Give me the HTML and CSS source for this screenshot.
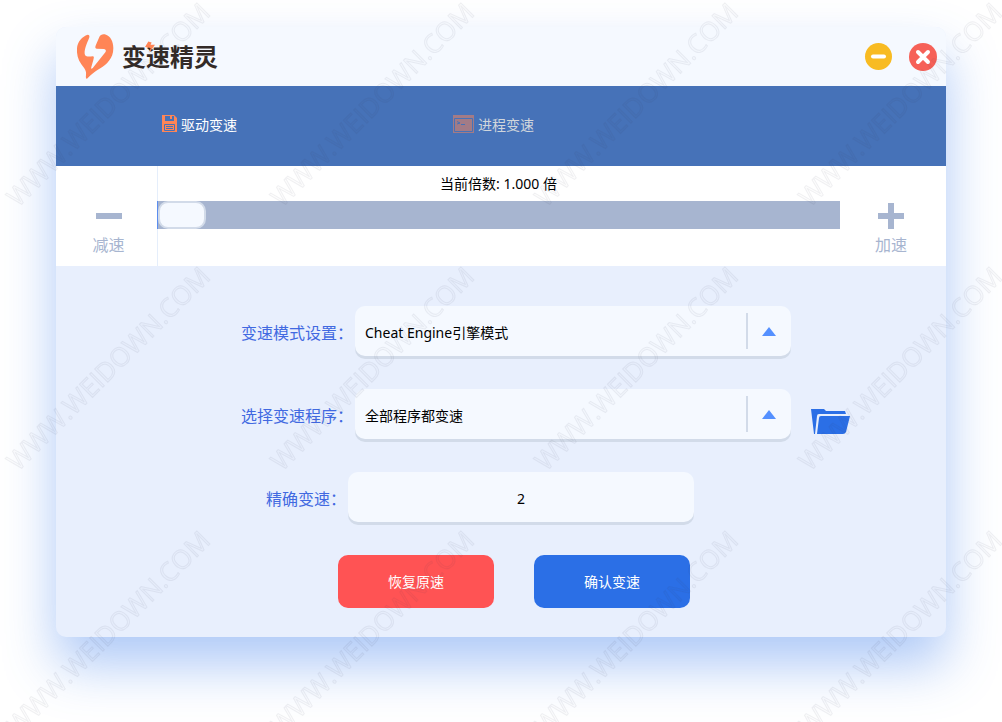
FILE: index.html
```
<!DOCTYPE html>
<html lang="zh-CN">
<head>
  <meta charset="UTF-8" />
  <title>变速精灵</title>
  <link rel="stylesheet" href="styles.css">
</head>
<body>
  <div class="window">
    <header class="title-bar">
      <svg class="logo" viewBox="78 57 114 141" aria-hidden="true">
        <path fill="#ff8556" d="M113 62C118 62 120 67 117 73C111 88 103 105 104 119C105 128 114 129 128 127C133 127 132 131 130 138L124 159C122 166 126 166 130 160L166 115C169 110 168 106 162 105L140 104C135 103 135 98 138 92L148 69C151 61 160 59 168 62C181 67 190 81 190 103C190 134 170 151 151 163C133 174 124 182 111 194C108 195 107 190 108 183C110 170 103 163 94 151C83 136 80 120 81 103C82 83 97 67 113 62Z"/>
      </svg>
      <h1>变速精灵
        <svg class="spark" viewBox="0 0 9 10" aria-hidden="true"><path fill="#ff8556" d="M3 0L6 1L5 3L9 3L4 10L5 6L0 5Z"/></svg>
      </h1>
      <div class="window-buttons">
        <button class="minimize" aria-label="最小化">
          <svg width="27" height="27" viewBox="0 0 27 27"><path d="M8 13.5H19"/></svg>
        </button>
        <button class="close" aria-label="关闭">
          <svg width="28" height="28" viewBox="0 0 28 28"><path d="M9 9L19 19M19 9L9 19"/></svg>
        </button>
      </div>
    </header>

    <nav class="tabs">
      <a class="tab active" href="#driver">
        <svg width="15" height="17" viewBox="0 0 15 17" aria-hidden="true">
          <path fill="#ff8556" d="M0 0H12L15 3V17H0Z"/>
          <path fill="#4672b8" d="M3 1H12V6H3Z"/>
          <path fill="#ff8556" d="M4 1H11V5H4Z"/>
          <path fill="#4672b8" d="M4 1H8V5H4ZM8 4H11V5H8ZM10 1H11V5H10Z"/>
          <path fill="none" stroke="#4672b8" d="M2.500 15.500V9.500H12.500V15.500Z"/>
          <path fill="#4672b8" d="M4 11H11V12H4ZM4 13H11V14H4Z"/>
        </svg>
        驱动变速
      </a>
      <a class="tab" href="#process">
        <svg width="21" height="18" viewBox="0 0 21 18" aria-hidden="true">
          <path fill="#ff8556" d="M0 0H21V18H0Z"/>
          <path fill="none" stroke="#4672b8" d="M1.500 3.500H19.500V16.500H1.500ZM4 6.500L7 8L4 9M8 9.500H12"/>
        </svg>
        进程变速
      </a>
    </nav>

    <section class="speed">
      <button class="step slower"><span class="sign"></span>减速</button>
      <div class="slider">
        <label for="speed">当前倍数: 1.000 倍</label>
        <input type="range" id="speed" min="0" max="100" value="0">
      </div>
      <button class="step faster"><span class="sign plus"></span>加速</button>
    </section>

    <form class="settings">
      <div class="row">
        <label for="mode">变速模式设置：</label>
        <div class="select-box">
          <select id="mode"><option>Cheat Engine引擎模式</option></select>
        </div>
      </div>
      <div class="row">
        <label for="program">选择变速程序：</label>
        <div class="select-box">
          <select id="program"><option>全部程序都变速</option></select>
        </div>
        <button type="button" class="folder" aria-label="浏览">
          <svg width="40" height="26" viewBox="0 0 40 26">
            <path fill="#2b6fe6" d="M0 0H13L15 2H34L35 5H8Q6 5 6 7L4 25H3Z"/>
            <path fill="#2b6fe6" d="M10 7H39L35 23Q34 25 32 25H6L8 9Q8 7 10 7Z"/>
          </svg>
        </button>
      </div>
      <div class="row exact">
        <label for="exact">精确变速：</label>
        <input type="text" id="exact" value="2">
      </div>
      <div class="row actions">
        <button type="button" class="restore">恢复原速</button>
        <button type="button" class="confirm">确认变速</button>
      </div>
    </form>
  </div>

  <svg class="watermark" aria-hidden="true">
    <text transform="translate(18 208) rotate(-45)">WWW.WEIDOWN.COM</text>
    <text transform="translate(282 208) rotate(-45)">WWW.WEIDOWN.COM</text>
    <text transform="translate(546 208) rotate(-45)">WWW.WEIDOWN.COM</text>
    <text transform="translate(810 208) rotate(-45)">WWW.WEIDOWN.COM</text>
    <text transform="translate(18 472) rotate(-45)">WWW.WEIDOWN.COM</text>
    <text transform="translate(282 472) rotate(-45)">WWW.WEIDOWN.COM</text>
    <text transform="translate(546 472) rotate(-45)">WWW.WEIDOWN.COM</text>
    <text transform="translate(810 472) rotate(-45)">WWW.WEIDOWN.COM</text>
    <text transform="translate(18 736) rotate(-45)">WWW.WEIDOWN.COM</text>
    <text transform="translate(282 736) rotate(-45)">WWW.WEIDOWN.COM</text>
    <text transform="translate(546 736) rotate(-45)">WWW.WEIDOWN.COM</text>
    <text transform="translate(810 736) rotate(-45)">WWW.WEIDOWN.COM</text>
  </svg>
</body>
</html>
```
FILE: styles.css
```
* {
  box-sizing: border-box;
}
body {
  margin: 0;
  padding: 27px 56px 85px;
  background: #fff;
  font-family: "Noto Sans", "Noto Sans CJK SC", sans-serif;
  font-size: 14px;
  line-height: 20px;
}
button, input, select {
  font: inherit;
  border: 0;
  margin: 0;
  padding: 0;
}
button {
  cursor: pointer;
  background: none;
}
svg {
  display: block;
}
.window {
  border-radius: 10px;
  overflow: hidden;
  background: #e8effd;
  box-shadow: 0 28px 52px rgba(63, 127, 235, 0.42);
}

/* title bar */
.title-bar {
  display: flex;
  align-items: center;
  height: 59px;
  padding: 0 9px 0 20px;
  background: #f5f9ff;
}
.logo {
  width: 38px;
  height: 47px;
}
h1 {
  position: relative;
  margin: 0 auto 0 8px;
  font-size: 24px;
  line-height: 32px;
  color: #332b28;
}
.spark {
  position: absolute;
  left: 23px;
  top: 0;
  width: 10px;
  height: 12px;
}
.window-buttons {
  display: flex;
  align-items: center;
  gap: 17px;
}
.window-buttons button {
  border-radius: 50%;
}
.window-buttons path {
  fill: none;
  stroke: #fff;
  stroke-width: 4;
  stroke-linecap: round;
}
.minimize {
  background: #f8bb22;
}
.close {
  background: #f66158;
}

/* tabs */
.tabs {
  display: flex;
  align-items: center;
  gap: 216px;
  height: 80px;
  padding: 0 106px 2px;
  background: #4672b8;
}
.tab {
  display: flex;
  align-items: center;
  gap: 4px;
  color: #fff;
  text-decoration: none;
  white-space: nowrap;
}
.tab svg {
  margin-bottom: 3px;
}
.tab:not(.active) svg {
  opacity: 0.5;
}
.tab:not(.active) {
  color: #d0d6dc;
}

/* speed slider */
.speed {
  display: flex;
  height: 100px;
  background: #fff;
}
.step {
  display: flex;
  flex-direction: column;
  align-items: center;
  gap: 6px;
  padding-top: 37px;
  font-size: 16px;
  color: #a7b5d0;
}
.slower {
  width: 101px;
  padding-left: 4px;
  box-shadow: 1px 0 0 #e5eefb;
}
.faster {
  width: 106px;
  padding-right: 4px;
}
.sign {
  width: 26px;
  height: 26px;
  background: linear-gradient(#a7b5d0, #a7b5d0) center / 26px 6px no-repeat;
}
.sign.plus {
  background:
    linear-gradient(#a7b5d0, #a7b5d0) center / 26px 6px no-repeat,
    linear-gradient(#a7b5d0, #a7b5d0) center / 6px 26px no-repeat;
}
.slider {
  flex: 1;
  display: flex;
  flex-direction: column;
  padding-top: 8px;
  gap: 7px;
  text-align: center;
}
.slider input {
  appearance: none;
  width: 100%;
  height: 28px;
  border-left: 1px solid #5b8def;
  background: #a7b5d0;
}
.slider input::-webkit-slider-thumb {
  appearance: none;
  width: 48px;
  height: 28px;
  border: 2px solid #d2dbe9;
  border-radius: 10px;
  background: #f5f9ff;
}

/* settings form */
.settings {
  display: flex;
  flex-direction: column;
  gap: 30px;
  padding: 40px 0 29px;
}
.row {
  display: flex;
  height: 53px;
  padding-left: 185px;
}
.row label {
  margin-right: 2px;
  font-size: 16px;
  line-height: 54px;
  color: #4169e1;
  white-space: nowrap;
}
.select-box {
  position: relative;
  width: 436px;
  height: 50px;
}
.select-box select,
.exact input {
  width: 100%;
  height: 50px;
  padding: 3px 10px 0;
  border-radius: 10px;
  background: #f5f9ff;
  box-shadow: 0 3px 0 #d2dbe9;
  color: #000;
}
.select-box select {
  appearance: none;
}
.select-box::before {
  content: "";
  position: absolute;
  right: 43px;
  top: 7px;
  width: 2px;
  height: 36px;
  background: #d2dbe9;
}
.select-box::after {
  content: "";
  position: absolute;
  right: 15px;
  top: 21px;
  border: 7px solid transparent;
  border-top: 0;
  border-bottom: 9px solid #5490ff;
}
.folder {
  align-self: center;
  margin-left: 20px;
  padding-top: 12px;
}
.exact {
  padding-left: 210px;
}
.exact input {
  width: 346px;
  text-align: center;
}
.actions {
  gap: 40px;
  padding-left: 282px;
}
.actions button {
  width: 156px;
  border-radius: 10px;
  color: #fff;
}
.restore {
  background: #ff5354;
}
.confirm {
  background: #2b6fe6;
}

/* watermark over the whole page */
.watermark {
  position: fixed;
  left: 0;
  top: 0;
  width: 100%;
  height: 100%;
  pointer-events: none;
}
.watermark text {
  font-family: "Open Sans", sans-serif;
  font-size: 26px;
  fill: rgba(0, 0, 0, 0.01);
  stroke: rgba(60, 70, 90, 0.08);
  stroke-width: 1px;
}
```
